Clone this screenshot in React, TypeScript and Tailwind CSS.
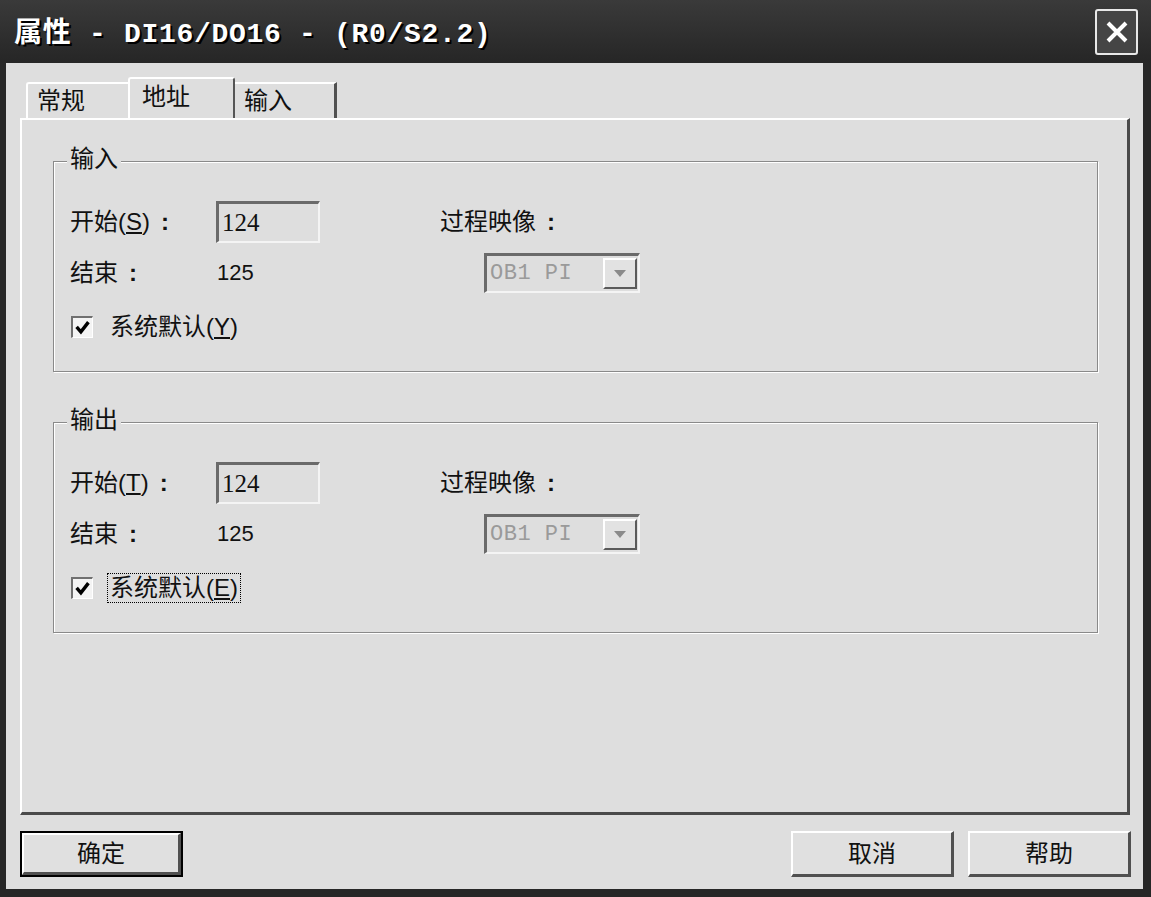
import type { ReactNode } from 'react';

function Mn({ children }: { children: ReactNode }) {
  return <span className="underline underline-offset-2">{children}</span>;
}

function Colon() {
  return <span className="ml-[11px] font-bold">:</span>;
}

function Check() {
  return (
    <span className="flex h-[22px] w-[22px] items-center justify-center border-t-2 border-l-2 border-t-[#707070] border-l-[#707070] border-r border-b border-r-white border-b-white bg-[#f4f4f4]">
      <svg width="15" height="15" viewBox="0 0 14 14">
        <polyline points="1.5,6.5 5.5,11 12.5,2" fill="none" stroke="#000" strokeWidth="3.2" />
      </svg>
    </span>
  );
}

function Sunken({ className, children }: { className: string; children?: ReactNode }) {
  return (
    <div
      className={`border-t-[3px] border-l-[3px] border-t-[#6a6a6a] border-l-[#6a6a6a] border-r-2 border-b-2 border-r-[#f4f4f4] border-b-[#f4f4f4] ${className}`}
    >
      {children}
    </div>
  );
}

function Combo() {
  return (
    <Sunken className="flex h-[40px] w-[156px] items-center justify-between pl-[3px] pr-[1px]">
      <span className="font-['Liberation_Mono',monospace] text-[22px] leading-none tracking-[0.5px] text-[#9a9a9a]">OB1 PI</span>
      <span className="flex h-[31px] w-[34px] items-center justify-center border-t-2 border-l-2 border-t-white border-l-white border-r-2 border-b-2 border-r-[#5a5a5a] border-b-[#5a5a5a] bg-[#e2e2e2]">
        <svg width="12" height="7" viewBox="0 0 12 7">
          <polygon points="0,0 12,0 6,7" fill="#8a8a8a" />
        </svg>
      </span>
    </Sunken>
  );
}

function GroupBox({
  title,
  startKey,
  defKey,
  focused,
  className,
}: {
  title: string;
  startKey: string;
  defKey: string;
  focused?: boolean;
  className: string;
}) {
  return (
    <div
      className={`relative mr-[29px] ml-[31px] h-[211px] border border-[#8a8a8a] pl-[16px] pt-[39px] shadow-[inset_1px_1px_0_#fff,1px_1px_0_#fff] ${className}`}
    >
      <span className="absolute -top-[17px] left-[13px] bg-[#dedede] px-[3px] text-[24px] leading-[28px]">{title}</span>
      <div className="flex h-[42px] items-center">
        <span className="w-[146px] text-[24px] leading-none">
          开始(<Mn>{startKey}</Mn>)<Colon />
        </span>
        <Sunken className="flex h-[42px] w-[104px] items-center pl-[3px]">
          <span className="font-['Liberation_Serif',serif] text-[25px] leading-none">124</span>
        </Sunken>
        <span className="ml-[120px] text-[24px] leading-none">
          过程映像<Colon />
        </span>
      </div>
      <div className="mt-[10px] flex h-[40px] items-center">
        <span className="w-[147px] text-[24px] leading-none">
          结束<Colon />
        </span>
        <span className="w-[267px] text-[22px] leading-none">125</span>
        <Combo />
      </div>
      <div className="mt-[23px] flex h-[22px] items-center pl-[1px]">
        <Check />
        <span
          className={`ml-[15px] px-[2px] text-[24px] leading-[28px] ${focused ? 'outline-1 outline-dotted outline-black' : ''}`}
        >
          系统默认(<Mn>{defKey}</Mn>)
        </span>
      </div>
    </div>
  );
}

function Btn({ label, isDefault }: { label: string; isDefault?: boolean }) {
  const inner = (
    <span className="flex h-full w-full items-center justify-center border-t-2 border-l-2 border-t-white border-l-white border-r-[3px] border-b-[3px] border-r-[#505050] border-b-[#505050] bg-[#e0e0e0] text-[24px] leading-none">
      {label}
    </span>
  );
  if (isDefault) {
    return <button type="button" className="h-[46px] w-[163px] border-2 border-black p-0">{inner}</button>;
  }
  return <button type="button" className="h-[46px] w-[163px] p-0">{inner}</button>;
}

export default function App() {
  return (
    <div className="flex h-[897px] w-[1151px] flex-col bg-[#272727] font-['Liberation_Sans','Noto_Sans_CJK_SC',sans-serif] text-[#111]">
      <div className="flex h-[63px] shrink-0 items-center justify-between bg-gradient-to-b from-[#3a3a3a] to-[#262626] pr-[13px] pl-[14px]">
        <span className="pt-[6px] font-['Liberation_Mono','Noto_Sans_CJK_SC',monospace] text-[28px] font-bold leading-none tracking-[0.7px] text-white [text-shadow:2px_2px_0_#000]">
          属性 - DI16/DO16 - (R0/S2.2)
        </span>
        <button
          type="button"
          className="flex h-[46px] w-[43px] items-center justify-center rounded-[3px] border-2 border-[#e8e8e8] bg-[#454545]"
        >
          <svg width="26" height="26" viewBox="0 0 26 26">
            <path d="M4 4 L22 22 M22 4 L4 22" stroke="#fff" strokeWidth="4" />
          </svg>
        </button>
      </div>

      <div className="mr-[8px] mb-[8px] ml-[6px] flex flex-1 flex-col bg-[#dedede] pt-[14px] pr-[12px] pl-[14px]">
        <div className="flex h-[41px] items-end pl-[6px]">
          <div className="flex h-[36px] w-[102px] items-center rounded-tl-[3px] border-t-2 border-l-2 border-white pl-[9px] text-[24px] leading-none">
            常规
          </div>
          <div className="flex h-[41px] w-[107px] items-start rounded-t-[3px] border-t-2 border-l-2 border-white border-r-2 border-r-[#555] pt-[5px] pl-[12px] text-[24px] leading-none">
            <span className="pt-[1px]">地址</span>
          </div>
          <div className="flex h-[36px] w-[102px] items-center border-t-2 border-white border-r-[3px] border-r-[#505050] pl-[9px] text-[24px] leading-none">
            输入
          </div>
        </div>

        <div className="mr-[1px] h-[697px] border-t-2 border-l-2 border-white border-r-[3px] border-b-[3px] border-r-[#4a4a4a] border-b-[#4a4a4a]">
          <GroupBox title="输入" startKey="S" defKey="Y" className="mt-[41px]" />
          <GroupBox title="输出" startKey="T" defKey="E" focused className="mt-[50px]" />
        </div>

        <div className="mt-[16px] flex items-center">
          <Btn label="确定" isDefault />
          <div className="ml-auto flex gap-[14px]">
            <Btn label="取消" />
            <Btn label="帮助" />
          </div>
        </div>
      </div>
    </div>
  );
}
